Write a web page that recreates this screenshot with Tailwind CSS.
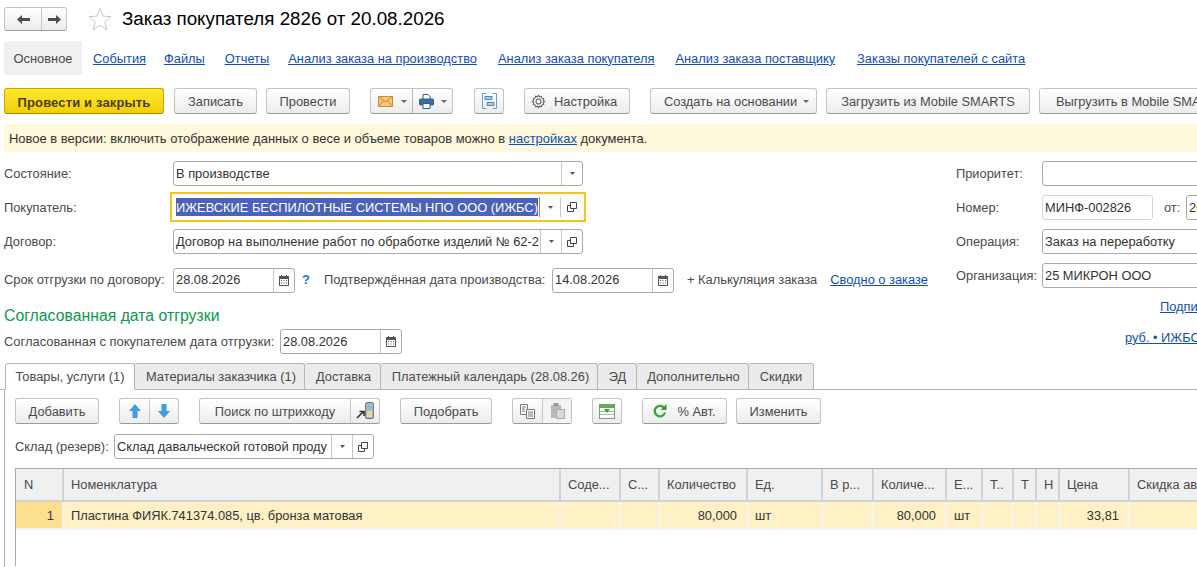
<!DOCTYPE html>
<html lang="ru">
<head>
    <meta charset="UTF-8">
    <title>Заказ покупателя 2826</title>
    <script src="https://cdn.jsdelivr.net/npm/@tailwindcss/browser@4"></script>
</head>
<body class="bg-white">
<div class="w-[1197px] h-[567px] overflow-hidden font-['Liberation_Sans',Arial,sans-serif] text-[12.85px] text-[#4a4a4a] leading-none">

    <!-- header -->
    <div class="flex items-center h-[37px] pl-1 pt-[1px]">
        <div class="flex w-[63px] h-[24px] bg-gradient-to-b from-white to-[#ececec] border border-[#c4c4c4] border-b-[#9a9a9a] rounded-[3px]">
            <div class="w-[37px] flex items-center justify-center border-r border-[#c8c8c8]">
                <svg width="13" height="9" viewBox="0 0 13 9"><path d="M0 4.500L5 0v3h8v3H5v3z" fill="#4d4d4d"/></svg>
            </div>
            <div class="flex-1 flex items-center justify-center">
                <svg width="13" height="9" viewBox="0 0 13 9"><path d="M13 4.500L8 0v3H0v3h8v3z" fill="#4d4d4d"/></svg>
            </div>
        </div>
        <svg class="ml-[21px]" width="24" height="24" viewBox="0 0 24 24"><path d="M12 1.500l3 7.600 8 .6-6.100 5.200 1.900 7.900-6.800-4.300-6.800 4.300 1.900-7.900L1 9.700l8-.6z" fill="#fff" stroke="#c9c9c9"/></svg>
        <h1 class="ml-[10px] text-[18.8px] text-black font-normal">Заказ покупателя 2826 от 20.08.2026</h1>
    </div>

    <!-- sections -->
    <div class="flex items-center h-[34px] mt-[4px] pl-1">
        <div class="w-[78px] h-[34px] pt-[2px] bg-[#f0f0f0] rounded-[3px] flex items-center justify-center">Основное</div>
        <div class="flex gap-[20px] ml-[11px] pt-[2px] text-[#0f4fb5] underline">
            <a>События</a><a class="-ml-[2px]">Файлы</a><a>Отчеты</a><a class="-ml-[1px]">Анализ заказа на производство</a><a class="ml-[1px]">Анализ заказа покупателя</a><a class="ml-[1px]">Анализ заказа поставщику</a><a class="ml-[2px]">Заказы покупателей с сайта</a>
        </div>
    </div>

    <!-- command bar -->
    <div class="flex items-center w-[1400px] h-[26px] mt-[13px] pl-1 whitespace-nowrap">
        <div class="w-[160px] shrink-0 h-[26px] pt-[2px] flex items-center justify-center bg-gradient-to-b from-[#fde92c] to-[#f2cf00] border border-[#c9a400] border-b-[#a98a00] rounded-[3px] font-bold text-[13px] tracking-[.15px] text-[#4a4000]">Провести и закрыть</div>
        <div class="w-[83px] shrink-0 h-[26px] pt-[2px] ml-[10px] flex items-center justify-center bg-gradient-to-b from-white to-[#ececec] border border-[#c4c4c4] border-b-[#9a9a9a] rounded-[3px]">Записать</div>
        <div class="w-[84px] shrink-0 h-[26px] pt-[2px] ml-[9px] flex items-center justify-center bg-gradient-to-b from-white to-[#ececec] border border-[#c4c4c4] border-b-[#9a9a9a] rounded-[3px]">Провести</div>
        <div class="w-[83px] shrink-0 h-[26px] ml-[20px] flex bg-gradient-to-b from-white to-[#ececec] border border-[#c4c4c4] border-b-[#9a9a9a] rounded-[3px]">
            <div class="w-[42px] flex items-center pl-[7px] gap-[8px] border-r border-[#b8b8b8]">
                <svg width="15" height="11" viewBox="0 0 15 11"><rect x=".5" y=".5" width="14" height="10" fill="#f7c67e" stroke="#d08a2c"/><path d="M.5.500l7 5.500 7-5.500M.5 10.500l5-6M14.500 10.500l-5-6" fill="none" stroke="#d08a2c"/></svg>
                <svg width="6" height="3" viewBox="0 0 6 3"><path d="M0 0h6L3 3z" fill="#666"/></svg>
            </div>
            <div class="flex-1 flex items-center pl-[6px] gap-[7px]">
                <svg width="15" height="15" viewBox="0 0 15 15"><path d="M4 .500h5l2 2v3H4z" fill="#fff" stroke="#2f5f8f"/><rect x=".5" y="5" width="14" height="6" rx="1" fill="#3f6f9f" stroke="#2f5f8f"/><path d="M4 9.500h7v5H4z" fill="#fff" stroke="#2f5f8f"/></svg>
                <svg width="6" height="3" viewBox="0 0 6 3"><path d="M0 0h6L3 3z" fill="#666"/></svg>
            </div>
        </div>
        <div class="w-[30px] shrink-0 h-[26px] ml-[21px] flex items-center justify-center bg-gradient-to-b from-white to-[#ececec] border border-[#c4c4c4] border-b-[#9a9a9a] rounded-[3px]">
            <svg width="15" height="16" viewBox="0 0 15 16"><path d="M4.500.500h-4v15h4M10.500.500h4v15h-4" fill="none" stroke="#6a9ecb"/><path d="M3 3.500h7v3H3zM5 9.500h7v3H5z" fill="#a9cdea" stroke="#4f86b8"/></svg>
        </div>
        <div class="w-[106px] shrink-0 h-[26px] pt-[2px] pl-[6px] ml-[20px] flex items-center gap-[8px] bg-gradient-to-b from-white to-[#ececec] border border-[#c4c4c4] border-b-[#9a9a9a] rounded-[3px]">
            <svg class="-mt-[2px]" width="15" height="15" viewBox="0 0 14 14"><circle cx="7" cy="7" r="2.300" fill="none" stroke="#666"/><path d="M7 1.200l1 1.500 1.700-.5.500 1.700 1.700.5-.5 1.700L12.800 7l-1.400 1 .5 1.700-1.700.5-.5 1.700-1.700-.5-1 1.400-1-1.400-1.700.5-.5-1.700-1.700-.5.5-1.700L1.200 7l1.400-1-.5-1.700 1.700-.5.5-1.700 1.700.5z" fill="none" stroke="#666"/></svg>
            <span>Настройка</span>
        </div>
        <div class="w-[167px] shrink-0 h-[26px] pt-[2px] pl-[6px] ml-[20px] flex items-center justify-center gap-[6px] bg-gradient-to-b from-white to-[#ececec] border border-[#c4c4c4] border-b-[#9a9a9a] rounded-[3px]">
            <span>Создать на основании</span>
            <svg class="-mt-[2px]" width="6" height="3" viewBox="0 0 6 3"><path d="M0 0h6L3 3z" fill="#666"/></svg>
        </div>
        <div class="w-[204px] shrink-0 h-[26px] pt-[2px] ml-[9px] flex items-center justify-center bg-gradient-to-b from-white to-[#ececec] border border-[#c4c4c4] border-b-[#9a9a9a] rounded-[3px]">Загрузить из Mobile SMARTS</div>
        <div class="w-[204px] shrink-0 h-[26px] pt-[2px] ml-[9px] flex items-center justify-center bg-gradient-to-b from-white to-[#ececec] border border-[#c4c4c4] border-b-[#9a9a9a] rounded-[3px]">Выгрузить в Mobile SMARTS</div>
    </div>

    <!-- notice -->
    <div class="h-[28px] pt-[2px] mt-[10px] ml-1 pl-[5px] flex items-center bg-[#fef8dc] text-[#333] text-[12.97px]">
        <span>Новое в версии: включить отображение данных о весе и объеме товаров можно в <a class="text-[#0f4fb5] underline">настройках</a> документа.</span>
    </div>

    <!-- form -->
    <div class="flex h-[211px] pl-1 whitespace-nowrap">
        <div class="w-[952px] shrink-0">
            <div class="flex items-center h-[25px] mt-[9px]">
                <label class="w-[169px] pt-[2px]">Состояние:</label>
                <div class="w-[410px] h-[25px] flex border border-[#a9a9a9] rounded-[3px] text-[#333]">
                    <div class="flex-1 flex items-center pl-[2px] pt-[2px]">В производстве</div>
                    <div class="w-[21px] flex items-center justify-center border-l border-[#c8c8c8]"><svg width="5" height="3" viewBox="0 0 5 3"><path d="M0 0h5L2.500 3z" fill="#555"/></svg></div>
                </div>
            </div>
            <div class="flex items-center h-[30px] mt-[6px]">
                <label class="w-[166px] pt-[2px]">Покупатель:</label>
                <div class="w-[416px] h-[30px] flex border-2 border-[#f5c518] p-[2px]">
                    <div class="flex-1 flex items-center pl-[2px] text-[#fff]">
                        <span class="bg-[#4a63b8] h-[18px] pt-[2px] flex items-center">ИЖЕВСКИЕ БЕСПИЛОТНЫЕ СИСТЕМЫ НПО ООО (ИЖБС)</span>
                    </div>
                    <div class="w-[21px] shrink-0 flex items-center justify-center border-l border-[#888] my-[1px]"><svg width="5" height="3" viewBox="0 0 5 3"><path d="M0 0h5L2.500 3z" fill="#555"/></svg></div>
                    <div class="w-[22px] shrink-0 flex items-center justify-center border-l border-[#c8c8c8] my-[1px]"><svg width="10" height="10" viewBox="0 0 10 10"><path d="M3.500.500h6v6h-6zM3.500 3.500h-3v6h6v-3" fill="none" stroke="#444"/></svg></div>
                </div>
            </div>
            <div class="flex items-center h-[25px] mt-[7px]">
                <label class="w-[169px] pt-[2px]">Договор:</label>
                <div class="w-[410px] h-[25px] flex border border-[#a9a9a9] rounded-[3px] text-[#333]">
                    <div class="flex-1 flex items-center pl-[2px] pt-[2px] overflow-hidden">Договор на выполнение работ по обработке изделий № 62-2</div>
                    <div class="w-[21px] shrink-0 flex items-center justify-center border-l border-[#c8c8c8]"><svg width="5" height="3" viewBox="0 0 5 3"><path d="M0 0h5L2.500 3z" fill="#555"/></svg></div>
                    <div class="w-[21px] shrink-0 flex items-center justify-center border-l border-[#c8c8c8]"><svg width="10" height="10" viewBox="0 0 10 10"><path d="M3.500.500h6v6h-6zM3.500 3.500h-3v6h6v-3" fill="none" stroke="#444"/></svg></div>
                </div>
            </div>
            <div class="flex items-center h-[25px] mt-[14px]">
                <label class="w-[169px]">Срок отгрузки по договору:</label>
                <div class="w-[122px] h-[25px] flex border border-[#a9a9a9] rounded-[3px] text-[#333]">
                    <div class="flex-1 flex items-center pl-[2px]">28.08.2026</div>
                    <div class="w-[21px] flex items-center justify-center border-l border-[#c8c8c8]">
                        <svg width="10" height="11" viewBox="0 0 10 11"><path d="M0 1h10v10H0z" fill="#555"/><path d="M1 4h8v6H1z" fill="#fff"/><path d="M2 0h1v2H2zM7 0h1v2H7zM2 5h1v1H2zM4.500 5h1v1h-1zM7 5h1v1H7zM2 7.500h1v1H2zM4.500 7.500h1v1h-1zM7 7.500h1v1H7z" fill="#555"/></svg>
                    </div>
                </div>
                <span class="ml-[7px] w-[22px] font-bold text-[#1b75bb]">?</span>
                <label class="w-[228px]">Подтверждённая дата производства:</label>
                <div class="w-[122px] h-[25px] flex border border-[#a9a9a9] rounded-[3px] text-[#333]">
                    <div class="flex-1 flex items-center pl-[2px]">14.08.2026</div>
                    <div class="w-[21px] flex items-center justify-center border-l border-[#c8c8c8]">
                        <svg width="10" height="11" viewBox="0 0 10 11"><path d="M0 1h10v10H0z" fill="#555"/><path d="M1 4h8v6H1z" fill="#fff"/><path d="M2 0h1v2H2zM7 0h1v2H7zM2 5h1v1H2zM4.500 5h1v1h-1zM7 5h1v1H7zM2 7.500h1v1H2zM4.500 7.500h1v1h-1zM7 7.500h1v1H7z" fill="#555"/></svg>
                    </div>
                </div>
                <span class="ml-[13px]">+ Калькуляция заказа</span>
                <a class="ml-[13px] text-[#0f4fb5] underline">Сводно о заказе</a>
            </div>
            <div class="mt-[15px] text-[15.8px] text-[#0a9a4a]">Согласованная дата отгрузки</div>
            <div class="flex items-center h-[25px] mt-[5px]">
                <label class="w-[276px] pt-[2px] text-[12.95px]">Согласованная с покупателем дата отгрузки:</label>
                <div class="w-[122px] h-[25px] flex border border-[#a9a9a9] rounded-[3px] text-[#333]">
                    <div class="flex-1 flex items-center pl-[2px] pt-[2px]">28.08.2026</div>
                    <div class="w-[21px] flex items-center justify-center border-l border-[#c8c8c8]">
                        <svg width="10" height="11" viewBox="0 0 10 11"><path d="M0 1h10v10H0z" fill="#555"/><path d="M1 4h8v6H1z" fill="#fff"/><path d="M2 0h1v2H2zM7 0h1v2H7zM2 5h1v1H2zM4.500 5h1v1h-1zM7 5h1v1H7zM2 7.500h1v1H2zM4.500 7.500h1v1h-1zM7 7.500h1v1H7z" fill="#555"/></svg>
                    </div>
                </div>
            </div>
        </div>
        <div class="flex-1 min-w-0">
            <div class="flex items-center h-[25px] mt-[9px]">
                <label class="w-[86px] pt-[2px] shrink-0">Приоритет:</label>
                <div class="w-[200px] shrink-0 h-[25px] border border-[#a9a9a9] rounded-[3px]"></div>
            </div>
            <div class="flex items-center h-[25px] mt-[9px]">
                <label class="w-[86px] pt-[2px] shrink-0">Номер:</label>
                <div class="w-[111px] shrink-0 h-[25px] flex items-center pl-[2px] pt-[2px] border border-[#d6d6d6] rounded-[3px] text-[#333]">МИНФ-002826</div>
                <span class="ml-[11px] w-[22px] pt-[2px] shrink-0">от:</span>
                <div class="w-[60px] shrink-0 h-[25px] flex items-center pl-[2px] pt-[2px] border border-[#a9a9a9] rounded-[3px] text-[#333]">20.08</div>
            </div>
            <div class="flex items-center h-[25px] mt-[9px]">
                <label class="w-[86px] pt-[2px] shrink-0">Операция:</label>
                <div class="w-[200px] shrink-0 h-[25px] flex items-center pl-[2px] pt-[2px] border border-[#a9a9a9] rounded-[3px] text-[#333]">Заказ на переработку</div>
            </div>
            <div class="flex items-center h-[25px] mt-[9px]">
                <label class="w-[86px] pt-[2px] shrink-0">Организация:</label>
                <div class="w-[200px] shrink-0 h-[25px] flex items-center pl-[2px] pt-[2px] border border-[#a9a9a9] rounded-[3px] text-[#333]">25 МИКРОН ООО</div>
            </div>
            <div class="mt-[13px] ml-[204px] text-[#0f4fb5] underline">Подписи</div>
            <div class="mt-[18px] ml-[169px] text-[#0f4fb5] underline">руб. • ИЖБС</div>
        </div>
    </div>

    <!-- tabs -->
    <div class="flex h-[27px] pl-[5px] border-b border-[#b5b5b5] whitespace-nowrap">
        <div class="w-[130px] h-[27px] pt-[2px] flex items-center justify-center bg-white border border-[#b5b5b5] border-b-white rounded-t-[3px]">Товары, услуги (1)</div>
        <div class="w-[170px] pt-[2px] pl-[3px] flex items-center justify-center bg-[#ebebeb] border-t border-r border-[#b5b5b5] rounded-t-[3px]">Материалы заказчика (1)</div>
        <div class="w-[76px] pt-[2px] pl-[2px] flex items-center justify-center bg-[#ebebeb] border-t border-r border-[#b5b5b5] rounded-t-[3px]">Доставка</div>
        <div class="w-[217px] pt-[2px] pl-[3px] flex items-center justify-center bg-[#ebebeb] border-t border-r border-[#b5b5b5] rounded-t-[3px]">Платежный календарь (28.08.26)</div>
        <div class="w-[39px] pt-[2px] pl-[1px] flex items-center justify-center bg-[#ebebeb] border-t border-r border-[#b5b5b5] rounded-t-[3px]">ЭД</div>
        <div class="w-[112px] pt-[2px] pl-[2px] flex items-center justify-center bg-[#ebebeb] border-t border-r border-[#b5b5b5] rounded-t-[3px]">Дополнительно</div>
        <div class="w-[65px] pt-[2px] flex items-center justify-center bg-[#ebebeb] border-t border-r border-[#b5b5b5] rounded-t-[3px]">Скидки</div>
    </div>

    <!-- tab panel -->
    <div class="ml-1 h-[177px] pl-[10px] pt-[8px] border-l border-[#b5b5b5] whitespace-nowrap">
        <div class="flex items-center h-[26px]">
            <div class="w-[84px] h-[26px] pt-[2px] flex items-center justify-center bg-gradient-to-b from-white to-[#ececec] border border-[#c4c4c4] border-b-[#9a9a9a] rounded-[3px]">Добавить</div>
            <div class="w-[60px] h-[26px] ml-[20px] flex bg-gradient-to-b from-white to-[#ececec] border border-[#c4c4c4] border-b-[#9a9a9a] rounded-[3px]">
                <div class="w-[30px] flex items-center justify-center border-r border-[#c8c8c8]"><svg width="12" height="14" viewBox="0 0 12 14"><path d="M6 0l6 7H8.500v7h-5V7H0z" fill="#3d9fe0"/></svg></div>
                <div class="flex-1 flex items-center justify-center"><svg width="12" height="14" viewBox="0 0 12 14"><path d="M6 14l6-7H8.500V0h-5v7H0z" fill="#3d9fe0"/></svg></div>
            </div>
            <div class="w-[181px] h-[26px] ml-[20px] flex bg-gradient-to-b from-white to-[#ececec] border border-[#c4c4c4] border-b-[#9a9a9a] rounded-[3px]">
                <div class="flex-1 pt-[2px] flex items-center justify-center">Поиск по штрихкоду</div>
                <div class="w-[29px] flex items-center justify-center border-l border-[#c8c8c8]">
                    <svg width="18" height="18" viewBox="0 0 18 18"><rect x="9.500" y=".5" width="8" height="16" rx="1.500" fill="#b5b5b5" stroke="#777"/><rect x="11" y="2" width="5" height="5" fill="#7fbdec"/><path d="M11 9h5v6h-5z" fill="#dcdca8"/><path d="M1 16l6-6M3.500 9.500H8V14" fill="none" stroke="#333" stroke-width="1.600"/></svg>
                </div>
            </div>
            <div class="w-[92px] h-[26px] pt-[2px] ml-[20px] flex items-center justify-center bg-gradient-to-b from-white to-[#ececec] border border-[#c4c4c4] border-b-[#9a9a9a] rounded-[3px]">Подобрать</div>
            <div class="w-[60px] h-[26px] ml-[20px] flex bg-gradient-to-b from-white to-[#ececec] border border-[#c4c4c4] border-b-[#9a9a9a] rounded-[3px]">
                <div class="w-[30px] flex items-center justify-center border-r border-[#c8c8c8]"><svg width="15" height="15" viewBox="0 0 15 15"><path d="M.5.500h7v10h-7z" fill="#fff" stroke="#777"/><path d="M6.500 5.500h8v9h-8z" fill="#fff" stroke="#777"/><path d="M8 8h5M8 10h5M8 12h5M2 3h4M2 5h3M2 7h3" stroke="#777"/></svg></div>
                <div class="flex-1 flex items-center justify-center bg-[#f3f3f3]"><svg width="15" height="16" viewBox="0 0 15 16"><path d="M1 2h10v13H1z" fill="#b9b9b9"/><path d="M3.500 0h5v3h-5z" fill="#999"/><path d="M6.500 6.500h8v9h-8z" fill="#d8d8d8" stroke="#aaa"/></svg></div>
            </div>
            <div class="w-[30px] h-[26px] ml-[20px] flex items-center justify-center bg-gradient-to-b from-white to-[#ececec] border border-[#c4c4c4] border-b-[#9a9a9a] rounded-[3px]">
                <svg width="16" height="15" viewBox="0 0 16 15"><rect x=".5" y=".5" width="15" height="14" fill="#fff" stroke="#7a9a7a"/><path d="M1 1h14v3H1z" fill="#5fb04a"/><path d="M1 7.500h14M1 10.500h14" stroke="#9bbf9b"/><path d="M5 5h6L8 9z" fill="#3d9a3d"/></svg>
            </div>
            <div class="w-[85px] h-[26px] pt-[2px] ml-[20px] flex items-center justify-center gap-[10px] bg-gradient-to-b from-white to-[#ececec] border border-[#c4c4c4] border-b-[#9a9a9a] rounded-[3px]">
                <svg class="-mt-[2px]" width="14" height="14" viewBox="0 0 14 14"><path d="M11.500 4.500A5.200 5.200 0 1 0 12 8.500" fill="none" stroke="#2fa52f" stroke-width="2.200"/><path d="M13.500 0v6h-6z" fill="#2fa52f"/></svg>
                <span>% Авт.</span>
            </div>
            <div class="w-[85px] h-[26px] pt-[2px] ml-[9px] flex items-center justify-center bg-gradient-to-b from-white to-[#ececec] border border-[#c4c4c4] border-b-[#9a9a9a] rounded-[3px]">Изменить</div>
        </div>
        <div class="flex items-center h-[25px] mt-[10px]">
            <label class="w-[99px] pt-[2px]">Склад (резерв):</label>
            <div class="w-[260px] h-[25px] flex border border-[#a9a9a9] rounded-[3px] text-[#333]">
                <div class="flex-1 flex items-center pl-[2px] pt-[2px] overflow-hidden">Склад давальческой готовой проду</div>
                <div class="w-[21px] shrink-0 flex items-center justify-center border-l border-[#c8c8c8]"><svg width="5" height="3" viewBox="0 0 5 3"><path d="M0 0h5L2.500 3z" fill="#555"/></svg></div>
                <div class="w-[21px] shrink-0 flex items-center justify-center border-l border-[#c8c8c8]"><svg width="10" height="10" viewBox="0 0 10 10"><path d="M3.500.500h6v6h-6zM3.500 3.500h-3v6h6v-3" fill="none" stroke="#444"/></svg></div>
            </div>
        </div>

        <!-- table -->
        <div class="mt-[9px] h-[98px] w-[1300px] border-t border-l border-[#a9a9a9] overflow-hidden">
            <table class="table-fixed w-[1251px] border-collapse text-left">
                <colgroup>
                    <col class="w-[47px]"><col class="w-[497px]"><col class="w-[60px]"><col class="w-[39px]"><col class="w-[88px]"><col class="w-[75px]"><col class="w-[51px]"><col class="w-[73px]"><col class="w-[36px]"><col class="w-[31px]"><col class="w-[23px]"><col class="w-[23px]"><col class="w-[70px]"><col class="w-[138px]">
                </colgroup>
                <thead>
                    <tr class="h-[32px] bg-[#f0f0f0] font-normal">
                        <th class="font-normal pl-[8px] pt-[2px] border-r-2 border-b-2 border-[#d2d2d2]">N</th>
                        <th class="font-normal pl-[7px] pt-[2px] border-r-2 border-b-2 border-[#d2d2d2]">Номенклатура</th>
                        <th class="font-normal pl-[7px] pt-[2px] border-r-2 border-b-2 border-[#d2d2d2]">Соде...</th>
                        <th class="font-normal pl-[7px] pt-[2px] border-r-2 border-b-2 border-[#d2d2d2]">С...</th>
                        <th class="font-normal pl-[7px] pt-[2px] border-r-2 border-b-2 border-[#d2d2d2]">Количество</th>
                        <th class="font-normal pl-[7px] pt-[2px] border-r-2 border-b-2 border-[#d2d2d2]">Ед.</th>
                        <th class="font-normal pl-[7px] pt-[2px] border-r-2 border-b-2 border-[#d2d2d2]">В р...</th>
                        <th class="font-normal pl-[7px] pt-[2px] border-r-2 border-b-2 border-[#d2d2d2]">Количе...</th>
                        <th class="font-normal pl-[7px] pt-[2px] border-r-2 border-b-2 border-[#d2d2d2]">Е...</th>
                        <th class="font-normal pl-[7px] pt-[2px] border-r-2 border-b-2 border-[#d2d2d2]">Т..</th>
                        <th class="font-normal pl-[7px] pt-[2px] border-r-2 border-b-2 border-[#d2d2d2]">Т</th>
                        <th class="font-normal pl-[7px] pt-[2px] border-r-2 border-b-2 border-[#d2d2d2] overflow-hidden">Н</th>
                        <th class="font-normal pl-[7px] pt-[2px] border-r-2 border-b-2 border-[#d2d2d2]">Цена</th>
                        <th class="font-normal pl-[7px] pt-[2px] border-b-2 border-[#d2d2d2]">Скидка авт.</th>
                    </tr>
                </thead>
                <tbody>
                    <tr class="h-[28px] bg-[#fdf1c5] text-[#333]">
                        <td class="bg-[#fde08f] pr-[8px] pt-[2px] text-right border-r-2 border-b-2 border-[#f3f3f3]">1</td>
                        <td class="pl-[7px] pt-[2px] border-r-2 border-b-2 border-[#f3f3f3]">Пластина ФИЯК.741374.085, цв. бронза матовая</td>
                        <td class="border-r-2 border-b-2 border-[#f3f3f3]"></td>
                        <td class="border-r-2 border-b-2 border-[#f3f3f3]"></td>
                        <td class="pr-[9px] pt-[2px] text-right border-r-2 border-b-2 border-[#f3f3f3]">80,000</td>
                        <td class="pl-[7px] pt-[2px] border-r-2 border-b-2 border-[#f3f3f3]">шт</td>
                        <td class="border-r-2 border-b-2 border-[#f3f3f3]"></td>
                        <td class="pr-[9px] pt-[2px] text-right border-r-2 border-b-2 border-[#f3f3f3]">80,000</td>
                        <td class="pl-[7px] pt-[2px] border-r-2 border-b-2 border-[#f3f3f3]">шт</td>
                        <td class="border-r-2 border-b-2 border-[#f3f3f3]"></td>
                        <td class="border-r-2 border-b-2 border-[#f3f3f3]"></td>
                        <td class="border-r-2 border-b-2 border-[#f3f3f3]"></td>
                        <td class="pr-[9px] pt-[2px] text-right border-r-2 border-b-2 border-[#f3f3f3]">33,81</td>
                        <td class="border-b-2 border-[#f3f3f3]"></td>
                    </tr>
                </tbody>
            </table>
        </div>
    </div>
</div>
</body>
</html>
